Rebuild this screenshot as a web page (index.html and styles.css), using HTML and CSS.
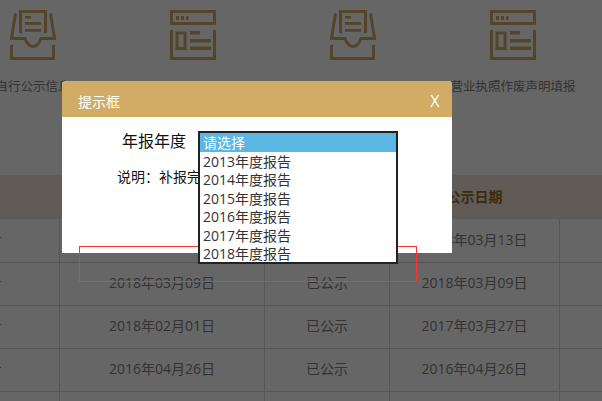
FILE: index.html
```html
<!DOCTYPE html>
<html lang="zh">
<head>
<meta charset="utf-8">
<title>提示框</title>
<link rel="stylesheet" href="styles.css">
</head>
<body>
<svg class="defs" width="0" height="0" aria-hidden="true">
  <symbol id="tray" viewBox="0 0 46 50">
    <path class="ln" d="M10.5 23V1.5H35.5V23"/>
    <rect x="15" y="6" width="6" height="2.6"/>
    <rect x="15" y="12" width="16" height="2.8"/>
    <rect x="15" y="19" width="16" height="2.8"/>
    <path class="ln" d="M5.5 3.5L1.5 28.5H15C17 34 19.500 36.500 23 36.500S29 34 31 28.500H44.500L40.500 3.500"/>
    <path class="ln" d="M1.500 35V48.500H43.500V35"/>
  </symbol>
  <symbol id="form" viewBox="0 0 46 50">
    <rect class="ln" x="1.500" y="1.500" width="43" height="12"/>
    <rect x="6" y="6" width="3" height="4"/>
    <rect x="11" y="6" width="3" height="4"/>
    <rect x="16" y="6" width="2.500" height="4"/>
    <path class="ln" d="M1.500 20V48.500H44.500V20"/>
    <rect class="ln" x="7" y="23" width="8" height="15.500"/>
    <rect x="20" y="21" width="10" height="3.500"/>
    <rect x="20" y="29" width="21" height="3.500"/>
    <rect x="20" y="36.500" width="21" height="3.500"/>
  </symbol>
</svg>

<main class="page">
  <ul class="services">
    <li class="service"><svg class="icon"><use href="#tray"/></svg><span>自行公示信息</span></li>
    <li class="service"><svg class="icon"><use href="#form"/></svg><span>&nbsp;</span></li>
    <li class="service"><svg class="icon"><use href="#tray"/></svg><span>&nbsp;</span></li>
    <li class="service"><svg class="icon"><use href="#form"/></svg><span>营业执照作废声明填报</span></li>
  </ul>

  <table class="records">
    <colgroup><col class="c1"><col class="c2"><col class="c3"><col class="c4"><col class="c5"></colgroup>
    <thead>
      <tr><th>报告名称</th><th>提交日期</th><th>状态</th><th>公示日期</th><th></th></tr>
    </thead>
    <tbody>
      <tr><td>2018年度报告</td><td>2018年03月13日</td><td>已公示</td><td>2018年03月13日</td><td></td></tr>
      <tr><td>2017年度报告</td><td>2018年03月09日</td><td>已公示</td><td>2018年03月09日</td><td></td></tr>
      <tr><td>2016年度报告</td><td>2018年02月01日</td><td>已公示</td><td>2017年03月27日</td><td></td></tr>
      <tr><td>2015年度报告</td><td>2016年04月26日</td><td>已公示</td><td>2016年04月26日</td><td></td></tr>
      <tr><td></td><td></td><td></td><td></td><td></td></tr>
    </tbody>
  </table>
</main>

<div class="overlay"></div>

<section class="dialog">
  <header class="dialog-head"><span>提示框</span><span class="close">X</span></header>
  <div class="dialog-body">
    <div class="field-label">年报年度</div>
    <div class="note">说明<span class="punct">：</span>补报完成后</div>
  </div>
</section>

<div class="outline"></div>

<ul class="listbox">
  <li class="active">请选择</li>
  <li>2013年度报告</li>
  <li>2014年度报告</li>
  <li>2015年度报告</li>
  <li>2016年度报告</li>
  <li>2017年度报告</li>
  <li>2018年度报告</li>
</ul>
</body>
</html>
```
FILE: styles.css
```css
* { box-sizing: border-box; }
html, body { margin: 0; height: 100%; }
body {
  width: 602px;
  height: 401px;
  overflow: hidden;
  position: relative;
  background: #fff;
  font-family: "Open Sans", "Noto Sans CJK SC", sans-serif;
  font-size: 14px;
  color: #808080;
}
.defs { position: absolute; }
.page { width: 1000px; margin-left: -47px; }
.services {
  list-style: none;
  margin: 0;
  padding: 10px 0 0;
  display: flex;
  height: 175px;
}
.service {
  width: 160px;
  display: flex;
  flex-direction: column;
  align-items: center;
}
.service span { font-size: 12.500px; line-height: 18px; margin-top: 18px; white-space: nowrap; color: #7f7f7f; }
.icon { width: 46px; height: 50px; fill: #d1ac65; display: block; }
.ln { fill: none; stroke: #d1ac65; stroke-width: 3; }

.records { border-collapse: collapse; table-layout: fixed; width: 860px; margin-left: -96px; }
.c1 { width: 202px; }
.c2 { width: 205px; }
.c3 { width: 125px; }
.c4 { width: 170px; }
.c5 { width: 158px; }
.records th {
  height: 44px;
  background: #f0e4d6;
  color: #9a6a20;
  font-size: 14px;
  font-weight: 700;
  padding: 0 0 2px;
}
.records td {
  height: 43px;
  padding: 0 0 3px;
  text-align: center;
  border: 1px solid #d8d8d8;
  border-top: 0;
}
.records td:first-child { padding: 0 2px 6px 0; }

.overlay { position: absolute; inset: 0; background: rgba(0, 0, 0, .6); }

.dialog {
  position: absolute;
  left: 62px;
  top: 81px;
  width: 390.400px;
  height: 172px;
  background: #fff;
  border-radius: 4px 4px 0 0;
  overflow: hidden;
}
.dialog-head {
  height: 36px;
  background: #d1ac65;
  color: #fff;
  font-size: 14px;
  display: flex;
  justify-content: space-between;
  align-items: center;
  padding: 3px 13px 0 16px;
}
.close { font-size: 16px; }
.dialog-body { padding: 13px 0 0 55px; color: #111; white-space: nowrap; }
.field-label { font-size: 16px; line-height: 22px; margin: 0 0 0 5px; }
.note { font-size: 14px; line-height: 20px; margin-top: 14px; }
.punct { font-family: "Noto Sans CJK TC", sans-serif; }

.outline {
  position: absolute;
  left: 79px;
  top: 246px;
  width: 338px;
  height: 36px;
  border: 1px solid #f33;
}

.listbox {
  position: absolute;
  left: 198px;
  top: 131px;
  width: 200px;
  height: 133px;
  margin: 0;
  padding: 0;
  list-style: none;
  background: #fff;
  border: 2px solid #222;
  color: #333;
  font-size: 14px;
  overflow: hidden;
}
.listbox li { height: 18.500px; line-height: 19px; padding-left: 3px; }
.listbox .active { background: #5ab6e3; color: #fff; }
```
